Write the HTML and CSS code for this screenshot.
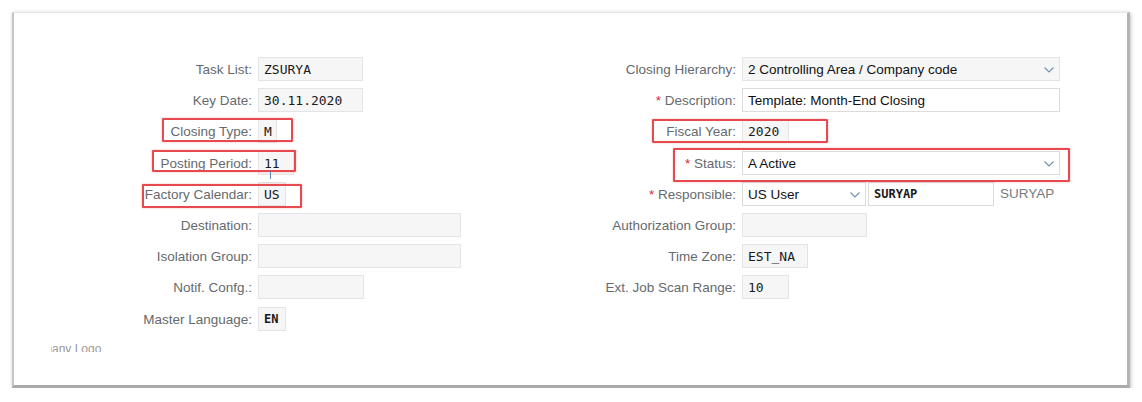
FILE: index.html
```html
<!DOCTYPE html>
<html lang="en">
<head>
<meta charset="utf-8">
<title>Task List</title>
<link rel="stylesheet" href="styles.css">
</head>
<body>
<div class="frame">
  <div class="form">
    <div class="col">
      <label class="lbl">Task List:</label>
      <div class="fld"><span class="inp ro mono w105">ZSURYA</span></div>
      <label class="lbl">Key Date:</label>
      <div class="fld"><span class="inp ro mono w105">30.11.2020</span></div>
      <label class="lbl">Closing Type:</label>
      <div class="fld"><span class="inp ro mono w19">M</span></div>
      <label class="lbl">Posting Period:</label>
      <div class="fld"><span class="inp ro mono w36">11</span></div>
      <label class="lbl">Factory Calendar:</label>
      <div class="fld"><span class="inp ro mono w28">US</span></div>
      <label class="lbl">Destination:</label>
      <div class="fld"><span class="inp ro w203"></span></div>
      <label class="lbl">Isolation Group:</label>
      <div class="fld"><span class="inp ro w203"></span></div>
      <label class="lbl">Notif. Confg.:</label>
      <div class="fld"><span class="inp ro w106"></span></div>
      <label class="lbl">Master Language:</label>
      <div class="fld"><span class="inp ro mono bold w28">EN</span></div>
    </div>
    <div class="col">
      <label class="lbl">Closing Hierarchy:</label>
      <div class="fld"><span class="inp ro sel w318">2 Controlling Area / Company code<svg class="chev" viewBox="0 0 10 6"><polyline points="0.5,0.5 5,5 9.5,0.5"/></svg></span></div>
      <label class="lbl"><span class="req">*</span> Description:</label>
      <div class="fld"><span class="inp ed w318">Template: Month-End Closing</span></div>
      <label class="lbl">Fiscal Year:</label>
      <div class="fld"><span class="inp ro mono w47">2020</span></div>
      <label class="lbl"><span class="req">*</span> Status:</label>
      <div class="fld"><span class="inp ed sel w318">A Active<svg class="chev" viewBox="0 0 10 6"><polyline points="0.5,0.5 5,5 9.5,0.5"/></svg></span></div>
      <label class="lbl"><span class="req">*</span> Responsible:</label>
      <div class="fld gap2"><span class="inp ed sel w124">US User<svg class="chev" viewBox="0 0 10 6"><polyline points="0.5,0.5 5,5 9.5,0.5"/></svg></span><span class="inp ed mono bold w126">SURYAP</span><span class="desc">SURYAP</span></div>
      <label class="lbl">Authorization Group:</label>
      <div class="fld"><span class="inp ro w125"></span></div>
      <label class="lbl">Time Zone:</label>
      <div class="fld"><span class="inp ro mono w66">EST_NA</span></div>
      <label class="lbl">Ext. Job Scan Range:</label>
      <div class="fld"><span class="inp ro mono w47">10</span></div>
    </div>
  </div>
  <div class="logo"><span>Company Logo</span></div>

  <div class="mark m-ctype"></div>
  <div class="mark m-period"></div>
  <div class="mark m-fcal"></div>
  <div class="mark m-fyear"></div>
  <div class="mark m-status"></div>
  <div class="cursor"></div>
</div>
</body>
</html>
```

FILE: styles.css
```css
html, body {
  margin: 0;
  padding: 0;
  background: #ffffff;
}

body {
  font-family: "Liberation Sans", Arial, sans-serif;
  font-size: 13.5px;
  color: #000;
}

.frame {
  position: relative;
  box-sizing: border-box;
  margin: 12px 0 0 12px;
  width: 1118px;
  height: 376px;
  background: #ffffff;
  border-top: 1px solid #e6e6e6;
  border-left: 2px solid #c6c6c6;
  border-right: 3px solid #b4b4b4;
  border-bottom: 3px solid #a9a9a9;
  box-shadow: 1px 2px 4px rgba(0, 0, 0, 0.22), 0 -1px 3px rgba(0, 0, 0, 0.06);
}

.form {
  display: flex;
  padding-top: 44px;
}

.col {
  width: 484px;
  display: grid;
  grid-template-columns: 238px 1fr;
  grid-auto-rows: 24px;
  column-gap: 6px;
  row-gap: 7.2px;
}

.lbl {
  text-align: right;
  line-height: 25px;
  color: #666a6e;
  white-space: nowrap;
}

.req {
  color: #e0262b;
}

.fld {
  display: flex;
  align-items: center;
}

.gap2 {
  gap: 2px;
}

.inp {
  position: relative;
  box-sizing: border-box;
  height: 24px;
  line-height: 23px;
  padding: 0 5px;
  white-space: nowrap;
  overflow: hidden;
  color: #111;
}

.ro {
  background: #f6f6f6;
  border: 1px solid #e4e4e4;
}

.ed {
  background: #ffffff;
  border: 1px solid #dcdcdc;
}

.mono {
  font-family: "DejaVu Sans Mono", "Liberation Mono", monospace;
  font-size: 13px;
  color: #1a1a1a;
}

.bold {
  font-weight: bold;
  font-size: 12px;
}

.sel {
  padding-right: 22px;
}

.chev {
  position: absolute;
  right: 5px;
  top: 9px;
  width: 10px;
  height: 6px;
  fill: none;
  stroke: #6e8fb0;
  stroke-width: 1.1;
}

.desc {
  margin-left: 4px;
  color: #777b7f;
  line-height: 24px;
}

.w19 { width: 19px; }
.w28 { width: 28px; }
.w36 { width: 36px; }
.w47 { width: 47px; }
.w66 { width: 66px; }
.w105 { width: 105px; }
.w106 { width: 106px; }
.w124 { width: 124px; }
.w125 { width: 125px; }
.w126 { width: 126px; }
.w203 { width: 203px; }
.w318 { width: 318px; }

.logo {
  height: 10px;
  width: 80px;
  overflow: hidden;
  margin: 11px 0 0 37px;
}

.logo span {
  display: block;
  margin-left: -31px;
  font-size: 12px;
  line-height: 14px;
  color: #9a9a9a;
  white-space: nowrap;
}

.mark {
  position: absolute;
  box-sizing: border-box;
  border: 2px solid #e64a4f;
  border-radius: 1px;
  box-shadow: 0 0 2px rgba(230, 74, 79, 0.45);
}

.m-ctype { left: 148px; top: 105px; width: 131px; height: 24px; }
.m-period { left: 138px; top: 137px; width: 144px; height: 22px; }
.m-fcal { left: 128px; top: 171px; width: 160px; height: 24px; }
.m-fyear { left: 638px; top: 106px; width: 176px; height: 24px; }
.m-status { left: 659px; top: 135px; width: 397px; height: 34px; }

.cursor {
  position: absolute;
  left: 256px;
  top: 158px;
  width: 1px;
  height: 8px;
  background: #5a86bd;
}
```
